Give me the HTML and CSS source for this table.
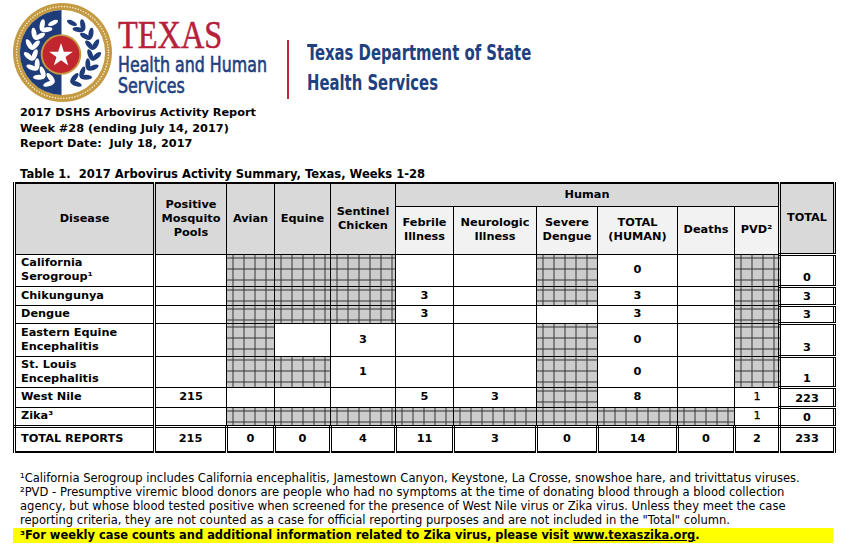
FILE: index.html
```html
<!DOCTYPE html>
<html lang="en">
<head>
<meta charset="utf-8">
<title>2017 DSHS Arbovirus Activity Report</title>
<link rel="stylesheet" href="styles.css">
</head>
<body>
<div class="page">
  <header class="brand">
    <svg class="seal" viewBox="0 0 100 100" aria-hidden="true">
      <defs>
        <g id="branch">
          <ellipse rx="6" ry="2.5" transform="translate(50 50) rotate(106) translate(31 0) rotate(55) translate(5.5 0)"/>
          <ellipse rx="6" ry="2.5" transform="translate(50 50) rotate(106) translate(31 0) rotate(125) translate(5.5 0)"/>
          <ellipse rx="6" ry="2.5" transform="translate(50 50) rotate(126) translate(31 0) rotate(55) translate(5.5 0)"/>
          <ellipse rx="6" ry="2.5" transform="translate(50 50) rotate(126) translate(31 0) rotate(125) translate(5.5 0)"/>
          <ellipse rx="6" ry="2.5" transform="translate(50 50) rotate(146) translate(31 0) rotate(55) translate(5.5 0)"/>
          <ellipse rx="6" ry="2.5" transform="translate(50 50) rotate(146) translate(31 0) rotate(125) translate(5.5 0)"/>
          <ellipse rx="6" ry="2.5" transform="translate(50 50) rotate(166) translate(31 0) rotate(55) translate(5.5 0)"/>
          <ellipse rx="6" ry="2.5" transform="translate(50 50) rotate(166) translate(31 0) rotate(125) translate(5.5 0)"/>
          <ellipse rx="6" ry="2.5" transform="translate(50 50) rotate(186) translate(31 0) rotate(55) translate(5.5 0)"/>
          <ellipse rx="6" ry="2.5" transform="translate(50 50) rotate(186) translate(31 0) rotate(125) translate(5.5 0)"/>
          <ellipse rx="6" ry="2.5" transform="translate(50 50) rotate(206) translate(31 0) rotate(55) translate(5.5 0)"/>
          <ellipse rx="6" ry="2.5" transform="translate(50 50) rotate(206) translate(31 0) rotate(125) translate(5.5 0)"/>
          <ellipse rx="6" ry="2.5" transform="translate(50 50) rotate(226) translate(31 0) rotate(55) translate(5.5 0)"/>
          <ellipse rx="6" ry="2.5" transform="translate(50 50) rotate(226) translate(31 0) rotate(125) translate(5.5 0)"/>
          <ellipse rx="5.5" ry="2.3" transform="translate(50 50) rotate(244) translate(31 0) rotate(90) translate(4.5 0)"/>
        </g>
      </defs>
      <circle cx="50" cy="50" r="50" fill="#c49a42"/>
      <circle cx="50" cy="50" r="46.4" fill="none" stroke="#f5ebcf" stroke-width="1.6" stroke-dasharray="0.01 2.85" stroke-linecap="round"/>
      <circle cx="50" cy="50" r="43" fill="#ffffff"/>
      <path d="M49 7.01 A43 43 0 0 0 49 92.99 Z" fill="#1f3c7a"/>
      <use href="#branch" fill="#ffffff"/>
      <use href="#branch" fill="#1f3c7a" transform="translate(100 0) scale(-1 1)"/>
      <circle cx="48.5" cy="52" r="20.5" fill="#c49a42"/>
      <circle cx="48.5" cy="52" r="18.6" fill="#c1262f"/>
      <polygon fill="#ffffff" transform="translate(48.5 53)" points="0,-12.5 2.82,-3.88 11.89,-3.86 4.56,1.48 7.35,10.11 0,4.79 -7.35,10.11 -4.56,1.48 -11.89,-3.86 -2.82,-3.88"/>
    </svg>
    <div class="hhs">
      <div class="texas">TEXAS</div>
      <div class="hhs-name">Health and Human<br>Services</div>
    </div>
    <div class="divider"></div>
    <div class="dshs">Texas Department of State<br>Health Services</div>
  </header>

  <div class="meta">
    <div>2017 DSHS Arbovirus Activity Report</div>
    <div>Week #28 (ending July 14, 2017)</div>
    <div>Report Date:&nbsp; July 18, 2017</div>
  </div>

  <div class="table-title">Table 1.&nbsp; 2017 Arbovirus Activity Summary, Texas, Weeks 1-28</div>

  <table class="report">
    <colgroup>
      <col class="c-dis"><col class="c-pos"><col class="c-avi"><col class="c-equ"><col class="c-sen">
      <col class="c-feb"><col class="c-neu"><col class="c-sev"><col class="c-th"><col class="c-dea">
      <col class="c-pvd"><col class="c-tot">
    </colgroup>
    <thead>
      <tr class="r-h1">
        <th rowspan="2" class="hd dis-h">Disease</th>
        <th rowspan="2" class="hd">Positive<br>Mosquito<br>Pools</th>
        <th rowspan="2" class="hd">Avian</th>
        <th rowspan="2" class="hd">Equine</th>
        <th rowspan="2" class="hd">Sentinel<br>Chicken</th>
        <th colspan="6" class="hd human">Human</th>
        <th rowspan="2" class="hd tot">TOTAL</th>
      </tr>
      <tr class="r-h2">
        <th class="sub">Febrile<br>Illness</th>
        <th class="sub">Neurologic<br>Illness</th>
        <th class="sub">Severe<br>Dengue</th>
        <th class="sub">TOTAL<br>(HUMAN)</th>
        <th class="sub">Deaths</th>
        <th class="sub">PVD²</th>
      </tr>
    </thead>
    <tbody>
      <tr class="r32">
        <td class="dis">California<br>Serogroup¹</td>
        <td></td>
        <td class="hatch"></td><td class="hatch"></td><td class="hatch"></td>
        <td></td><td></td>
        <td class="hatch"></td>
        <td>0</td>
        <td></td>
        <td class="hatch"></td>
        <td class="tot">0</td>
      </tr>
      <tr class="r19">
        <td class="dis">Chikungunya</td>
        <td></td>
        <td class="hatch"></td><td class="hatch"></td><td class="hatch"></td>
        <td>3</td><td></td>
        <td class="hatch"></td>
        <td>3</td>
        <td></td>
        <td class="hatch"></td>
        <td class="tot">3</td>
      </tr>
      <tr class="r18">
        <td class="dis">Dengue</td>
        <td></td>
        <td class="hatch"></td><td class="hatch"></td><td class="hatch"></td>
        <td>3</td><td></td>
        <td></td>
        <td>3</td>
        <td></td>
        <td class="hatch"></td>
        <td class="tot">3</td>
      </tr>
      <tr class="r33">
        <td class="dis">Eastern Equine<br>Encephalitis</td>
        <td></td>
        <td class="hatch"></td><td></td><td>3</td>
        <td></td><td></td>
        <td class="hatch"></td>
        <td>0</td>
        <td></td>
        <td class="hatch"></td>
        <td class="tot">3</td>
      </tr>
      <tr class="r31">
        <td class="dis">St. Louis<br>Encephalitis</td>
        <td></td>
        <td class="hatch"></td><td class="hatch"></td><td>1</td>
        <td></td><td></td>
        <td class="hatch"></td>
        <td>0</td>
        <td></td>
        <td class="hatch"></td>
        <td class="tot">1</td>
      </tr>
      <tr class="r20">
        <td class="dis">West Nile</td>
        <td>215</td>
        <td></td><td></td><td></td>
        <td>5</td><td>3</td>
        <td class="hatch"></td>
        <td>8</td>
        <td></td>
        <td class="reg">1</td>
        <td class="tot">223</td>
      </tr>
      <tr class="r19">
        <td class="dis">Zika³</td>
        <td></td>
        <td class="hatch"></td><td class="hatch"></td><td class="hatch"></td>
        <td class="hatch"></td><td class="hatch"></td>
        <td class="hatch"></td>
        <td class="hatch"></td>
        <td class="hatch"></td>
        <td class="reg">1</td>
        <td class="tot">0</td>
      </tr>
      <tr class="r-total">
        <td class="dis">TOTAL REPORTS</td>
        <td>215</td>
        <td>0</td><td>0</td><td>4</td>
        <td>11</td><td>3</td>
        <td>0</td>
        <td>14</td>
        <td>0</td>
        <td>2</td>
        <td class="tot">233</td>
      </tr>
    </tbody>
  </table>

  <div class="notes">
    <p class="fn fn1">¹California Serogroup includes California encephalitis, Jamestown Canyon, Keystone, La Crosse, snowshoe hare, and trivittatus viruses.</p>
    <p class="fn fn2">²PVD - Presumptive viremic blood donors are people who had no symptoms at the time of donating blood through a blood collection<br>agency, but whose blood tested positive when screened for the presence of West Nile virus or Zika virus. Unless they meet the case<br>reporting criteria, they are not counted as a case for official reporting purposes and are not included in the "Total" column.</p>
    <p class="fn fn3">³For weekly case counts and additional information related to Zika virus, please visit <a class="link" href="#">www.texaszika.org</a>.</p>
  </div>
</div>
</body>
</html>
```

FILE: styles.css
```css
* { box-sizing: border-box; }

body {
  margin: 0;
  background: #ffffff;
  color: #000000;
  font-family: "DejaVu Sans", Verdana, sans-serif;
}

.page { width: 850px; }

/* ---------- Brand header ---------- */
.brand {
  display: flex;
  align-items: flex-start;
  height: 105px;
  padding: 3px 0 0 13px;
}

.seal {
  width: 99px;
  height: 99px;
  flex: none;
}

.hhs {
  width: 169px;
  flex: none;
  margin: 12px 0 0 6px;
  white-space: nowrap;
}

.texas {
  font-family: "Liberation Serif", "Times New Roman", serif;
  color: #b5203a;
  font-size: 39px;
  line-height: 39px;
  -webkit-text-stroke: 0.5px #b5203a;
  transform: scaleX(0.83);
  transform-origin: left center;
}

.hhs-name {
  font-family: "DejaVu Sans Condensed", "DejaVu Sans", sans-serif;
  color: #21407f;
  font-size: 22px;
  line-height: 21px;
  -webkit-text-stroke: 0.6px #21407f;
  transform: scaleX(0.8);
  transform-origin: left center;
}

.divider {
  width: 2px;
  height: 59px;
  margin-top: 37px;
  background: #c1262f;
  flex: none;
}

.dshs {
  margin: 35px 0 0 18px;
  white-space: nowrap;
  font-family: "DejaVu Sans Condensed", "DejaVu Sans", sans-serif;
  font-weight: bold;
  color: #21407f;
  font-size: 22px;
  line-height: 29.5px;
  transform: scaleX(0.75);
  transform-origin: left center;
}

/* ---------- Report meta ---------- */
.meta {
  padding-left: 20px;
  font-size: 11.3px;
  font-weight: bold;
  line-height: 15.5px;
}

.table-title {
  margin-top: 15px;
  padding-left: 20px;
  font-size: 11.55px;
  font-weight: bold;
  line-height: 14px;
  white-space: nowrap;
}

/* ---------- Table ---------- */
.report {
  margin: 1.5px 0 0 13px;
  width: 820px;
  table-layout: fixed;
  border-collapse: collapse;
  border-top: 2px solid #000;
  border-bottom: 2px solid #000;
  border-left: 3px double #000;
  border-right: 3px double #000;
  font-size: 11.3px;
  font-weight: bold;
}

.c-dis { width: 140px; }
.c-pos { width: 72px; }
.c-avi { width: 48px; }
.c-equ { width: 56px; }
.c-sen { width: 65px; }
.c-feb { width: 58px; }
.c-neu { width: 83px; }
.c-sev { width: 61px; }
.c-th  { width: 80px; }
.c-dea { width: 57px; }
.c-pvd { width: 45px; }
.c-tot { width: 55px; }

.report th,
.report td {
  border: 1px solid #000;
  padding: 0 2px;
  text-align: center;
  vertical-align: middle;
  line-height: 14px;
  white-space: nowrap;
}

.report th { font-weight: bold; }

.hd {
  background: #d9d9d9;
  border-left-width: 2px;
  border-right-width: 2px;
}

.human { border-bottom: 2px solid #000; }

.sub { background: #f2f2f2; }

.r-h1 { height: 23px; }
.r-h2 { height: 48px; }
.r32 { height: 32px; }
.r19 { height: 19px; }
.r18 { height: 18px; }
.r33 { height: 33px; }
.r31 { height: 31px; }
.r20 { height: 20px; }
.r-total { height: 26px; }

.report .dis {
  text-align: left;
  padding-left: 5px;
  border-right: 3px double #000;
}

.report .dis-h { border-right: 3px double #000; }

.report .tot {
  border-left: 3px double #000;
  border-bottom: 3px double #000;
  vertical-align: bottom;
  padding-bottom: 0;
}

.report th.tot { vertical-align: middle; }

.report .reg {
  font-weight: normal;
  color: #000;
  -webkit-text-stroke: 0.25px #000;
  padding-left: 3px;
}

.r-total td {
  border-top: 3px double #000;
  border-left: 3px double #000;
  border-right: 3px double #000;
}

.r-total td.tot { vertical-align: middle; border-bottom: 2px solid #000; }

.report .hatch {
  background-color: #cccccc;
  background-image:
    repeating-linear-gradient(to right, transparent 0 5px, #333333 5px 6px, transparent 6px 11px),
    repeating-linear-gradient(to bottom, transparent 0 3px, #333333 3px 4px, transparent 4px 11px);
}

/* ---------- Notes ---------- */
.notes {
  margin: 18px 0 0 13px;
  width: 820px;
}

.fn {
  margin: 0;
  padding-left: 7px;
  font-size: 11.55px;
  white-space: nowrap;
}

.fn1 { line-height: 14px; }

.fn2 { line-height: 13.8px; margin-top: 1px; }

.fn3 {
  margin-top: 1px;
  background: #ffff00;
  font-weight: bold;
  font-size: 11.45px;
  line-height: 15px;
}

.link {
  color: #000;
  text-decoration: underline;
}
```
